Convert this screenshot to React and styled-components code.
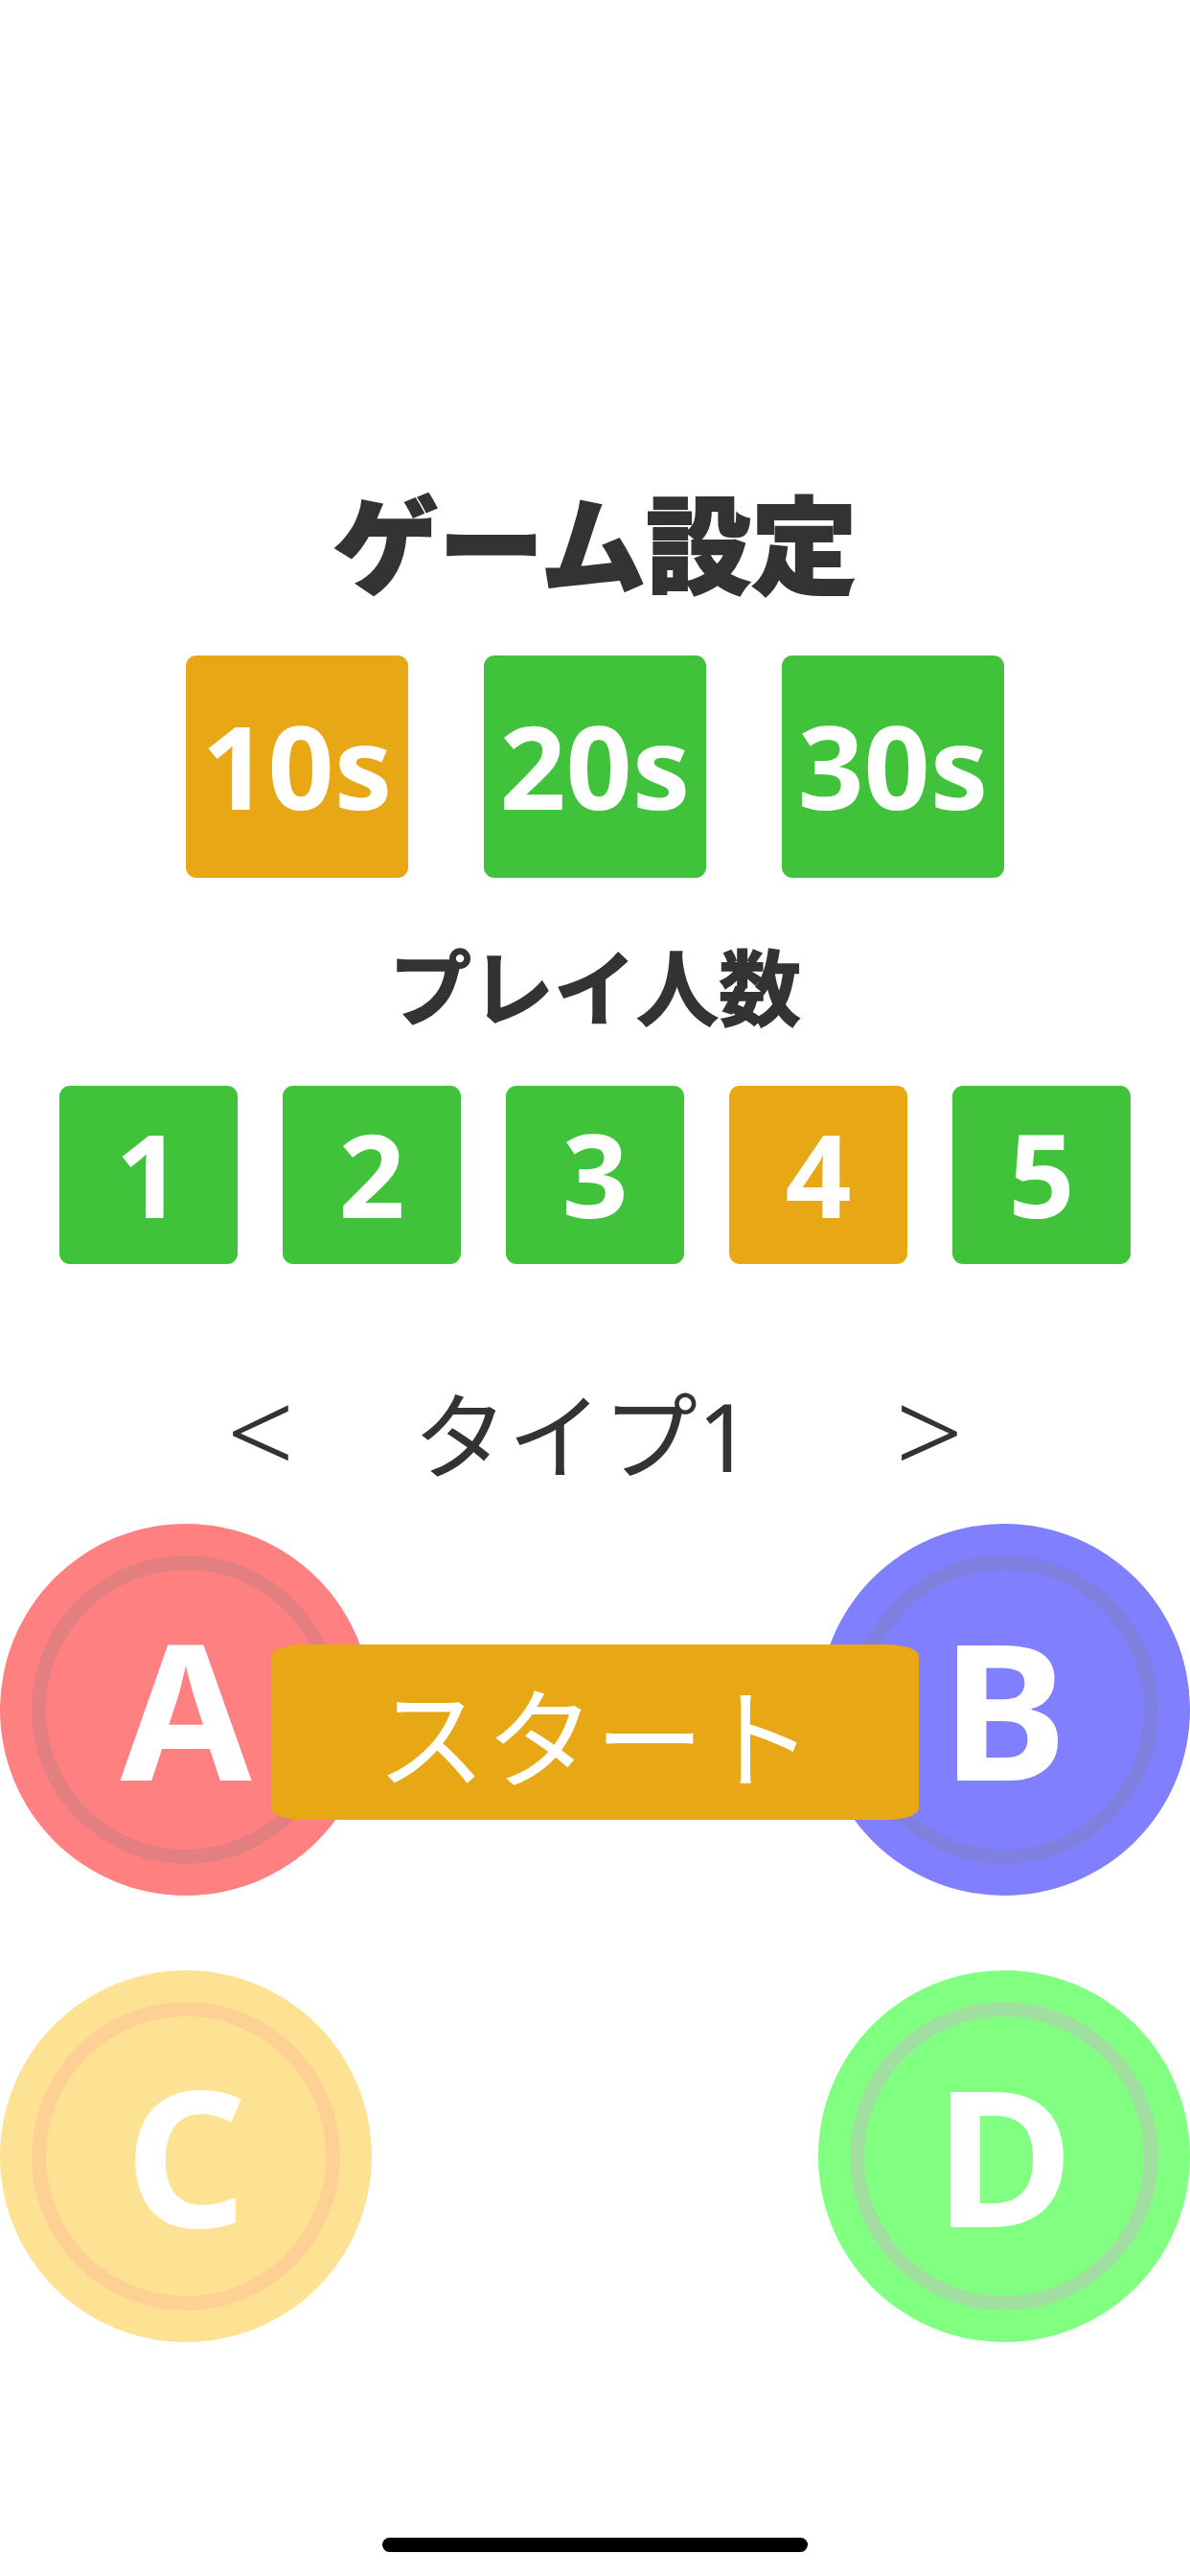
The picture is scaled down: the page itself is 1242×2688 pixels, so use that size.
import React, { useState } from "react";
import styled, { createGlobalStyle } from "styled-components";

const ORANGE = "#e8a816";
const GREEN = "#40c33b";
const INK = "#333333";
const JP = `"Noto Sans CJK JP", "Noto Sans", sans-serif`;
const LATIN = `"Noto Sans", "Noto Sans CJK JP", sans-serif`;

const GlobalStyle = createGlobalStyle`
  html, body {
    margin: 0;
    padding: 0;
    background: #ffffff;
  }
  body {
    font-family: ${LATIN};
  }
`;

const Screen = styled.div`
  width: 1242px;
  min-height: 2688px;
  display: flex;
  flex-direction: column;
  align-items: center;
  box-sizing: border-box;
`;

const Title = styled.h1`
  margin: 508px 0 0;
  font-family: ${JP};
  font-size: 110px;
  line-height: 110px;
  font-weight: 900;
  color: ${INK};
  -webkit-text-stroke: 2px ${INK};
`;

const Heading = styled.h2`
  margin: ${(p) => p.$top}px 0 0;
  font-family: ${JP};
  font-size: 86px;
  line-height: 86px;
  font-weight: 700;
  color: ${INK};
  -webkit-text-stroke: 1.5px ${INK};
`;

const OptionRow = styled.div`
  display: flex;
  justify-content: center;
  gap: ${(p) => p.$gap}px;
  margin-top: ${(p) => p.$top}px;
`;

const OptionButton = styled.button`
  width: ${(p) => p.$size}px;
  height: ${(p) => p.$size}px;
  padding: 0;
  border: none;
  border-radius: 11px;
  background: ${(p) => (p.$selected ? ORANGE : GREEN)};
  color: #ffffff;
  font-family: ${LATIN};
  font-size: 121px;
  font-weight: 700;
  line-height: 1;
  display: flex;
  align-items: center;
  justify-content: center;
  white-space: nowrap;
  cursor: pointer;
`;

const ButtonLabel = styled.span`
  display: block;
  margin-bottom: 4px;
`;

const TypeSelector = styled.div`
  display: grid;
  grid-template-columns: 120px 578px 120px;
  justify-content: center;
  margin-top: 129px;
  width: 100%;
  font-size: 99px;
  line-height: 99px;
  color: ${INK};
`;

const Arrow = styled.button`
  align-self: start;
  padding: 0;
  border: none;
  background: none;
  font-family: ${LATIN};
  font-size: 124px;
  font-weight: 300;
  line-height: 87px;
  color: ${INK};
  text-align: center;
  cursor: pointer;
`;

const TypeLabel = styled.span`
  padding-left: 99px;
  white-space: nowrap;
`;

const Pad = styled.div`
  position: relative;
  width: 100%;
  margin-top: 43px;
  display: grid;
  grid-template-columns: 388px 1fr 388px;
  grid-template-rows: 388px 388px;
  row-gap: 78px;
`;

const Bubble = styled.div`
  grid-column: ${(p) => p.$col};
  width: 388px;
  height: 388px;
  border-radius: 50%;
  background: ${(p) => p.$fill};
  display: flex;
  align-items: center;
  justify-content: center;
`;

const Ring = styled.div`
  width: 322px;
  height: 322px;
  box-sizing: border-box;
  border-radius: 50%;
  border: 15px solid ${(p) => p.$ring};
  display: flex;
  align-items: center;
  justify-content: center;
`;

const Letter = styled.span`
  font-family: ${LATIN};
  font-size: 198px;
  line-height: 1;
  font-weight: 700;
  color: #ffffff;
  margin-bottom: 6px;
`;

const StartButton = styled.button`
  position: absolute;
  top: 126px;
  left: 50%;
  transform: translateX(-50%);
  width: 676px;
  height: 183px;
  padding: 0;
  border: none;
  border-radius: 34px / 12px;
  background: ${ORANGE};
  color: #ffffff;
  font-family: ${JP};
  font-size: 114px;
  font-weight: 400;
  line-height: 1;
  display: flex;
  align-items: center;
  justify-content: center;
  cursor: pointer;
`;

const HomeIndicator = styled.div`
  margin-top: auto;
  margin-bottom: 25px;
  width: 444px;
  height: 15px;
  border-radius: 8px;
  background: #000000;
`;

const durations = [10, 20, 30];
const players = [1, 2, 3, 4, 5];
const pads = [
  { key: "A", fill: "#ff8080", ring: "#e37f81", col: 1 },
  { key: "B", fill: "#8080ff", ring: "#7f7fe0", col: 3 },
  { key: "C", fill: "#fee294", ring: "#fed093", col: 1 },
  { key: "D", fill: "#80ff80", ring: "#a0dfa0", col: 3 },
];

export default function App() {
  const [duration, setDuration] = useState(10);
  const [count, setCount] = useState(4);
  const [type, setType] = useState(1);

  return (
    <>
      <GlobalStyle />
      <Screen>
        <Title>ゲーム設定</Title>
        <OptionRow $gap={79} $top={66}>
          {durations.map((d) => (
            <OptionButton
              key={d}
              $size={232}
              $selected={d === duration}
              onClick={() => setDuration(d)}
            >
              <ButtonLabel>{d}s</ButtonLabel>
            </OptionButton>
          ))}
        </OptionRow>

        <Heading $top={68}>プレイ人数</Heading>
        <OptionRow $gap={47} $top={63}>
          {players.map((n) => (
            <OptionButton
              key={n}
              $size={186}
              $selected={n === count}
              onClick={() => setCount(n)}
            >
              <ButtonLabel>{n}</ButtonLabel>
            </OptionButton>
          ))}
        </OptionRow>

        <TypeSelector>
          <Arrow onClick={() => setType((t) => Math.max(1, t - 1))}>&lt;</Arrow>
          <TypeLabel>タイプ{type}</TypeLabel>
          <Arrow onClick={() => setType((t) => t + 1)}>&gt;</Arrow>
        </TypeSelector>

        <Pad>
          {pads.map((p) => (
            <Bubble key={p.key} $fill={p.fill} $col={p.col}>
              <Ring $ring={p.ring}>
                <Letter>{p.key}</Letter>
              </Ring>
            </Bubble>
          ))}
          <StartButton>スタート</StartButton>
        </Pad>

        <HomeIndicator />
      </Screen>
    </>
  );
}
